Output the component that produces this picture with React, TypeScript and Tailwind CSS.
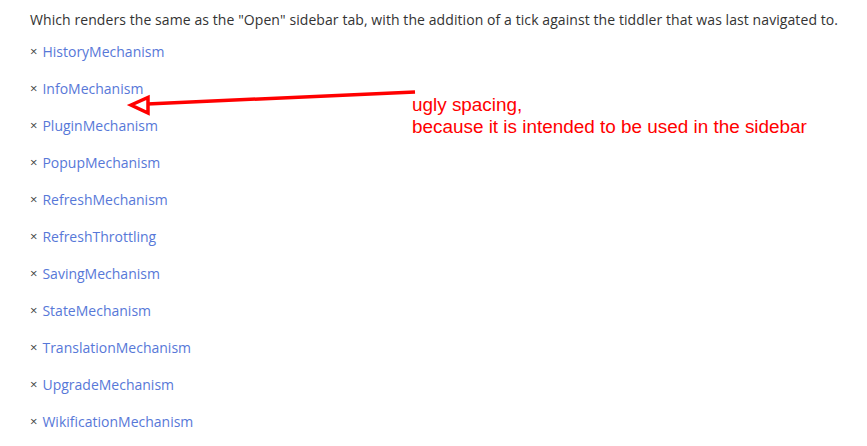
const links = [
  "HistoryMechanism",
  "InfoMechanism",
  "PluginMechanism",
  "PopupMechanism",
  "RefreshMechanism",
  "RefreshThrottling",
  "SavingMechanism",
  "StateMechanism",
  "TranslationMechanism",
  "UpgradeMechanism",
  "WikificationMechanism",
];

const App = () => {
  return (
    <div className="relative w-[867px] h-[446px] overflow-hidden bg-white px-[30px] pt-[10px] font-['Open_Sans',sans-serif] text-[14px] text-[#333]">
      <p className="leading-[20px] whitespace-nowrap tracking-[0.08px]">
        Which renders the same as the "Open" sidebar tab, with the addition of a tick against the tiddler that was last navigated to.
      </p>
      <div className="mt-[3px] flex flex-col">
        {links.map((name) => (
          <div key={name} className="h-[37px] flex items-center gap-[5px]">
            <span className="text-[#444] text-[13px]">×</span>
            <a className="text-[#5778d8] cursor-pointer">{name}</a>
          </div>
        ))}
      </div>

      {/* annotation */}
      <svg className="absolute left-0 top-0 pointer-events-none" width="867" height="446">
        <line x1="415" y1="92" x2="147" y2="104" stroke="#ff0000" strokeWidth="3.5" />
        <polygon points="131,105 148,97.5 148,113" fill="none" stroke="#ff0000" strokeWidth="3.5" strokeLinejoin="miter" />
      </svg>
      <div className="absolute left-[412px] top-[94px] font-['Liberation_Sans',Arial,sans-serif] text-[18.9px] leading-[22px] text-[#ff0000]">
        <div>ugly spacing,</div>
        <div>because it is intended to be used in the sidebar</div>
      </div>
    </div>
  );
};

export default App;
